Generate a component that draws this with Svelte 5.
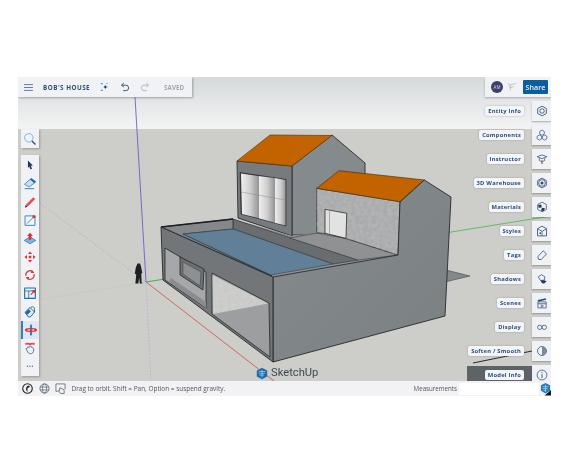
<script>
  const N = '#2d4f73';
  const R = '#ea2a2a';
  const B = '#2f7fc1';
  const tools = [
    { name: 'select', parts: [{ d: 'M6 3 L12 9 L9.5 9.4 L11 13 L9 13.6 L7.6 10.2 L6 12 Z', f: '#1f3a5a' }] },
    { name: 'eraser', parts: [{ d: 'M1.8 10 L10 3 L15.6 7 L7.5 13.4 Z', f: '#c9e0f2', s: B }, { d: 'M8.6 4.2 L10 3 L15.6 7 L13.6 8.6 Z', f: '#1f5f9c' }, { d: 'M2 15.4 H13.6', s: B, w: 1.2 }] },
    { name: 'pencil', parts: [{ d: 'M3.2 12.2 L12.5 2.8 L14.8 5 L5.4 14.4 Z', f: '#ee4a4a' }, { d: 'M3.2 12.2 L5.4 14.4 L2.2 15.4 Z', f: '#26384d' }] },
    { name: 'rectangle', parts: [{ d: 'M2.5 3.5 H14.5 V15 H2.5 Z', f: '#eef5fb', s: B, w: 1.1 }, { d: 'M4.5 13 L13 5', s: '#4a5a68', w: 0.9 }, { d: 'M11.6 3 H15 V6.2 H11.6 Z', f: R }] },
    { name: 'pushpull', parts: [{ d: 'M1.5 11.5 L8.5 7 L15.5 11.5 L8.5 15.5 Z', f: '#7fb6e0', s: B }, { d: 'M8.5 2 L12 6 H10 V10.5 H7 V6 H5 Z', f: R }] },
    { name: 'move', parts: [{ d: 'M8.5 1.8 L11 4.8 H6 Z M8.5 15.2 L11 12.2 H6 Z M1.8 8.5 L4.8 6 V11 Z M15.2 8.5 L12.2 6 V11 Z', f: R }, { d: 'M7 7 H10 V10 H7 Z', f: R }] },
    { name: 'rotate', parts: [{ d: 'M3.6 9.5 A5 5 0 0 1 12 4.8 M13.4 7.5 A5 5 0 0 1 5 12.2', s: R, w: 1.4 }, { d: 'M10.8 2.4 L13.8 6 L9.6 6 Z M6.2 14.6 L3.2 11 L7.4 11 Z', f: R }] },
    { name: 'scale', parts: [{ d: 'M2 2.5 H15 V15 H2 Z', f: '#e6f0f8', s: '#1f6ca8', w: 1.3 }, { d: 'M2 6 H15 M7 6 V15', s: '#1f6ca8', w: 1 }, { d: 'M9 10 L12 7 L10.4 5.6 L15 4.5 L14.2 9 L12.9 7.8 L10 10.8 Z', f: R }] },
    { name: 'paint', parts: [{ d: 'M2.5 9 L8.5 3 L14 8.5 L9 14.5 H6.5 Z', f: '#dcebf6', s: '#1f6ca8', w: 1.2 }, { d: 'M2.5 9 L7 5 L9.5 8 L5 12 Z', f: '#1f6ca8' }, { d: 'M9 3.5 C11 1 14 2 14 5 V9', s: N, w: 1 }] },
    { name: 'orbit', active: true, parts: [{ d: 'M8.5 2 V15', s: '#3d7fb8', w: 2.6 }, { d: 'M2 8.5 C2 6.4 15 6.4 15 8.5 C15 10.6 2 10.6 2 8.5 Z', s: R, w: 1.5 }, { d: 'M1 8.5 L4 6 V11 Z M16 8.5 L13 6 V11 Z', f: R }] },
    { name: 'hand', parts: [{ d: 'M2.5 3.5 H14.5', s: R, w: 1.6 }, { d: 'M5.5 2 L8.5 5 L11.5 2', s: R, w: 1 }, { d: 'M5 9 C5 7 7 7 7.5 8 L8 6.5 C9 5.5 10 6.5 10 7.5 C12 7.5 13 9 13 11 C13 14 11 15.5 9 15.5 C7 15.5 6 14 5 12 L3.6 9.6 C4 9 4.5 9 5 9 Z', f: '#eef2f7', s: N, w: 0.9 }] }
  ];
  const panels = [
    { label: 'Entity Info', parts: [{ d: 'M8 1.5 L13.8 4.8 V11.2 L8 14.5 L2.2 11.2 V4.8 Z', s: N, w: 1.1 }, { d: 'M8 5 A3 3 0 1 0 8 11 A3 3 0 1 0 8 5 Z', s: N, w: 1.1 }] },
    { label: 'Components', parts: [{ d: 'M8 1.5 L11 3.2 V6.8 L8 8.5 L5 6.8 V3.2 Z M4.5 8 L7.5 9.7 V13 L4.5 14.7 L1.5 13 V9.7 Z M11.5 8 L14.5 9.7 V13 L11.5 14.7 L8.5 13 V9.7 Z', s: N, w: 0.95 }] },
    { label: 'Instructor', parts: [{ d: 'M1.5 5 L8 2.5 L14.5 5 L8 7.5 Z', s: N, w: 1 }, { d: 'M4.5 7 V10 C6 11.5 10 11.5 11.5 10 V7', s: N, w: 1 }, { d: 'M8 9.5 V14', s: N, w: 0.8 }, { d: 'M7.2 12.5 H9 V14.3 H7.2 Z', f: R }] },
    { label: '3D Warehouse', parts: [{ d: 'M8 1.5 L13.8 4.8 V11.2 L8 14.5 L2.2 11.2 V4.8 Z', s: N, w: 1.1 }, { d: 'M8 3.6 A4.4 4.4 0 1 0 8 12.4 A4.4 4.4 0 1 0 8 3.6 Z', s: N, w: 1 }, { d: 'M8 6 A2 2 0 1 0 8 10 A2 2 0 1 0 8 6 Z', f: N }] },
    { label: 'Materials', parts: [{ d: 'M8 1.5 L13.8 4.8 V11.2 L8 14.5 L2.2 11.2 V4.8 Z', s: N, w: 1 }, { d: 'M3 5.2 L7 4.8 L7.5 8.5 L3.5 9 Z M8 9 L12 9.5 L10 13.5 L6.6 12.6 Z', f: '#1e3a5a' }] },
    { label: 'Styles', parts: [{ d: 'M8 1.5 L14 5 V14.5 H2 V5 Z', s: N, w: 1.1 }, { d: 'M2 5 L8 8.5 L14 5 M8 8.5 V14.5', s: N, w: 1 }, { d: 'M4 11 C5 9 7 9 6.8 12.5 Z', f: N }] },
    { label: 'Tags', parts: [{ d: 'M2.5 10 L9.5 2.5 L14 6.5 L7 14 H3.5 Z', s: N, w: 1.05 }] },
    { label: 'Shadows', parts: [{ d: 'M3 5 L7.5 2.2 L12 5.2 L11 9.5 L6 10 Z', s: N, w: 1 }, { d: 'M6 10 L11 9.5 L14 11 L11 14 L8 13.5 Z', f: '#1e3a5a' }] },
    { label: 'Scenes', parts: [{ d: 'M2.5 6.5 H13.5 V14.5 H2.5 Z M2.5 9 H13.5', s: N, w: 1 }, { d: 'M2.2 4 L13 1.6 L13.6 3.8 L2.8 6.2 Z', f: N }, { d: 'M7 10.4 L10 12 L7 13.6 Z', s: N, w: 0.8 }] },
    { label: 'Display', parts: [{ d: 'M5 5.5 A2.9 2.9 0 1 0 5 11.3 A2.9 2.9 0 1 0 5 5.5 Z M11 5.5 A2.9 2.9 0 1 0 11 11.3 A2.9 2.9 0 1 0 11 5.5 Z', s: N, w: 1 }] },
    { label: 'Soften / Smooth', parts: [{ d: 'M8 2 A6 6 0 1 0 8 14 A6 6 0 1 0 8 2 Z', s: N, w: 1 }, { d: 'M8 2 A6 6 0 0 1 8 14 Z', f: '#7d8c9a' }] },
    { label: 'Model Info', parts: [{ d: 'M8 1.5 A6.5 6.5 0 1 0 8 14.5 A6.5 6.5 0 1 0 8 1.5 Z', s: N, w: 1 }, { d: 'M8 7 V12 M8 4.2 V5.6', s: N, w: 1.2 }] }
  ];
</script>

{#snippet glyph(parts, box)}
  <svg class="glyph" viewBox={box} aria-hidden="true">
    {#each parts as p}
      <path d={p.d} fill={p.f ?? 'none'} stroke={p.s ?? 'none'} stroke-width={p.w ?? 1} stroke-linejoin="round" />
    {/each}
  </svg>
{/snippet}

<div class="viewport">
  <div class="stage">
    <svg class="scene" viewBox="18 77 533 304" aria-hidden="true">
      <defs>
        <linearGradient id="sky" x1="0" y1="0" x2="0" y2="1">
          <stop offset="0" stop-color="#d6dadb" />
          <stop offset="1" stop-color="#f3f4f4" />
        </linearGradient>
        <linearGradient id="pane" x1="0" y1="0" x2="1" y2="0">
          <stop offset="0" stop-color="#f0f0f0" />
          <stop offset="0.55" stop-color="#cfcfcf" />
          <stop offset="1" stop-color="#9a9a9a" />
        </linearGradient>
        <linearGradient id="wallR" x1="0" y1="0" x2="1" y2="1">
          <stop offset="0" stop-color="#858a8d" />
          <stop offset="1" stop-color="#7b8083" />
        </linearGradient>
        <filter id="mottle" x="0" y="0" width="100%" height="100%">
          <feTurbulence type="fractalNoise" baseFrequency="0.25" numOctaves="2" seed="4" result="n" />
          <feColorMatrix in="n" type="matrix" values="0 0 0 0 1  0 0 0 0 1  0 0 0 0 1  0.22 0 0 0 -0.07" result="w" />
          <feComposite in="w" in2="SourceGraphic" operator="in" result="t" />
          <feMerge><feMergeNode in="SourceGraphic" /><feMergeNode in="t" /></feMerge>
        </filter>
      </defs>

      <rect x="18" y="77" width="533" height="52" fill="url(#sky)" />
      <rect x="18" y="129" width="533" height="252" fill="#cdcec9" />

      <!-- axes -->
      <path d="M18 187 L146 282" stroke="#c9a8a8" stroke-width="0.7" stroke-dasharray="2 1.4" fill="none" />
      <path d="M18 303 L146 282" stroke="#b0cba9" stroke-width="0.7" stroke-dasharray="2 1.4" fill="none" />
      <path d="M146 282 L151 381" stroke="#acacd2" stroke-width="0.7" stroke-dasharray="2 1.4" fill="none" />
      <path d="M135 97 L146 282" stroke="#6663c8" stroke-width="0.9" fill="none" />
      <path d="M146 282 L274 381" stroke="#d25a58" stroke-width="0.9" fill="none" />
      <path d="M146 282 L165 279" stroke="#43b04a" stroke-width="1" fill="none" />
      <path d="M445 233 L551 216" stroke="#5fbf63" stroke-width="1" fill="none" />

      <!-- ground fragments -->
      <path d="M446 270 L470 276 L445 282 Z" fill="#85888a" stroke="#333" stroke-width="0.5" />
      <rect x="467" y="366" width="65" height="15" fill="#5e6366" />
      <path d="M473 363 L532 351" stroke="#26292b" stroke-width="1" fill="none" />

      <!-- upper house -->
      <path d="M292 166 L332 135 L365 163 L365 190 L320 235 L292 235 Z" fill="#858a8d" stroke="#2b2d2f" stroke-width="0.9" stroke-linejoin="round" />
      <path d="M237 161 L292 166 L292 236 L238 218 Z" fill="#777b7e" stroke="#2b2d2f" stroke-width="0.9" stroke-linejoin="round" />
      <path d="M237 161 L270 135 L332 135.5 L292 166 Z" fill="#c26300" stroke="#5a3a10" stroke-width="0.7" stroke-linejoin="round" />
      <path d="M240 172.5 L286 179.5 L286 226 L241 214 Z" fill="#3a3c3e" stroke="#26292b" stroke-width="0.6" />
      <path d="M241 173.5 L258 176 L258 218 L242 214 Z" fill="url(#pane)" />
      <path d="M258.5 176 L274 178 L274 222.6 L258.5 218.3 Z" fill="url(#pane)" />
      <path d="M274.5 178 L285.5 180 L285.5 225.5 L274.5 222.7 Z" fill="url(#pane)" />
      <path d="M241 192 L285.5 200" stroke="#8c8c8c" stroke-width="0.5" fill="none" />

      <!-- terrace floor -->
      <path d="M233 219 L292 236 L316 233 L398 255 L273 277 L161 227 Z" fill="#8e9092" />
      <path d="M233 219 L233 229 L333 264 L358 260 Z" fill="#6a6d6f" stroke="#2f3133" stroke-width="0.6" />
      <path d="M290 238 L317 233 L346 238.5 L398 255 L358 260 Z" fill="#8f9193" stroke="#3b3d3f" stroke-width="0.6" />

      <!-- second house front -->
      <path d="M316.7 188.3 L400 201.7 L398 255 L346 238.5 L325 233.5 L316.7 232.7 Z" fill="#a9aaab" stroke="#2b2d2f" stroke-width="0.8" filter="url(#mottle)" />
      <path d="M325 209.3 L346.7 213.3 L346 238.3 L325 233.3 Z" fill="#e2e2e0" stroke="#2b2d2f" stroke-width="0.8" />
      <path d="M329.5 210.4 V234.4" stroke="#9c9c9c" stroke-width="0.8" fill="none" />
      <path d="M316.7 188.3 L339 170.7 L424.3 180 L400 201.7 Z" fill="#c26300" stroke="#4a3210" stroke-width="0.7" stroke-linejoin="round" />

      <!-- pool and parapet -->
      <path d="M161 227 L233 219 L233 229 L183 234 L272 276 Z" fill="#85888a" stroke="#26292b" stroke-width="0.7" stroke-linejoin="round" />
      <path d="M161 227 L233 219" stroke="#1c1e20" stroke-width="1.3" fill="none" />
      <path d="M183 234 L233 229 L333 264 L271 275 Z" fill="#617f96" stroke="#33414d" stroke-width="0.6" />

      <!-- big wall -->
      <path d="M273 277 L398 255 L400 202 L424.3 180 L451 197 L445 316 L273 362 Z" fill="url(#wallR)" stroke="#26292b" stroke-width="0.9" stroke-linejoin="round" />

      <!-- front face -->
      <path d="M161 227 L273 277 L273 362 L163 280 Z" fill="#737678" stroke="#26292b" stroke-width="0.9" stroke-linejoin="round" />
      <path d="M165 248 L206 272 L206 308 L165 280 Z" fill="#a5a7a8" stroke="#26292b" stroke-width="0.8" />
      <path d="M169 282 L171 278 L206 302 L206 308 Z" fill="#8a8c8e" />
      <path d="M180 257 L204 269 L203 290 L180 275 Z" fill="#6d7072" stroke="#26292b" stroke-width="0.8" />
      <path d="M183 262 L201 272 L200 286 L183 274 Z" fill="#8d9092" stroke="#3d3f41" stroke-width="0.5" />
      <path d="M212 273 L269 303 L270 357 L212 314 Z" fill="#9c9ea0" stroke="#26292b" stroke-width="0.8" />
      <path d="M212.5 275 L268 303.5 L213 314 Z" fill="#c9c9c8" filter="url(#mottle)" />

      <!-- scale figure -->
      <path d="M137.5 263.5 h2.6 l1 3.5 l1.2 6 l-1 0.6 l0.3 9 l1.2 0.8 h-3 l-0.7 -6 l-0.7 6 h-3 l0.8 -9 l-1.4 -0.8 l1 -6 Z" fill="#1c2024" />
    </svg>

    <div class="brand">
      <svg class="brand-mark" viewBox="0 0 12 12" aria-hidden="true">
        <path d="M6 0.3 L11.2 3 V9 L6 11.7 L0.8 9 V3 Z" fill="#1a6fb3" />
        <path d="M2.6 4 H9.4 M2.6 5.8 H9 M3.4 7.6 H8 M6 2.2 V9.8" stroke="#cfe4f2" stroke-width="0.55" />
      </svg>
      <span>SketchUp</span>
    </div>

    <header class="file-bar">
      <svg class="menu" viewBox="0 0 9 7" aria-hidden="true"><path d="M0 .6 H9 M0 3.5 H9 M0 6.4 H9" stroke="#6a7f93" stroke-width="1" /></svg>
      <span class="file-name">BOB'S HOUSE</span>
      <svg class="bar-icon spark" viewBox="0 0 11 11" aria-hidden="true">
        <path d="M5.8 3.2 L6.8 4.9 L9 5.5 L6.8 6.1 L5.8 7.8 L4.8 6.1 L3.6 5.5 L4.8 4.9 Z" fill="#12406e" />
        <path d="M1 1 H3 V2.6 H1 Z M1 8.4 H3 V10 H1 Z M7 1 H8.3 V2.2 H7 Z" fill="#23a3dc" />
      </svg>
      <svg class="bar-icon undo" viewBox="0 0 11 11" aria-hidden="true"><path d="M2 3.5 H6.5 A3 3 0 0 1 6.5 9.5 H3.5 M4.2 1.2 L1.6 3.5 L4.2 5.6" fill="none" stroke="#2d4f73" stroke-width="1" /></svg>
      <svg class="bar-icon redo" viewBox="0 0 11 11" aria-hidden="true"><path d="M9 3.5 H4.5 A3 3 0 0 0 4.5 9.5 H7.5 M6.8 1.2 L9.4 3.5 L6.8 5.6" fill="none" stroke="#b3b6ba" stroke-width="1" /></svg>
      <span class="saved">SAVED</span>
    </header>

    <div class="account">
      <span class="avatar">AM</span>
      <svg class="cart" viewBox="0 0 12 12" aria-hidden="true"><path d="M1 2 L4 3.5 V10 M4 3.5 L11 1.5 M4 7 L8 5.5 M2.5 5 L4 7" fill="none" stroke="#a9adb1" stroke-width="0.8" /></svg>
      <span class="share">Share</span>
    </div>

    <aside class="left-rail">
      <div class="tool-card search">
        <svg viewBox="0 0 18 18" aria-hidden="true">
          <circle cx="7.5" cy="7.5" r="5.4" fill="#eef6fb" stroke="#6ba9d4" stroke-width="1.1" />
          <path d="M11.5 11.5 L16 16" stroke="#33475c" stroke-width="1.6" />
        </svg>
      </div>
      <div class="tool-card tools">
        {#each tools as t (t.name)}
          <div class="tool" class:active={t.active}>{@render glyph(t.parts, '0 0 17 17')}</div>
        {/each}
        <div class="tool more">...</div>
      </div>
    </aside>

    <aside class="right-rail">
      {#each panels as p (p.label)}
        <div class="panel-row">
          <span class="tip">{p.label}</span>
          <div class="panel-btn">{@render glyph(p.parts, '0 0 16 16')}</div>
        </div>
      {/each}
    </aside>
  </div>

  <footer class="status">
    <svg class="status-icon" viewBox="0 0 12 12" aria-hidden="true">
      <circle cx="6" cy="6" r="5.2" fill="none" stroke="#22262a" stroke-width="1.2" />
      <path d="M7.5 2.6 C4 3 3.4 7.6 6.4 9.6 C5.2 7 6 4.6 8.8 4.4 Z" fill="#22262a" />
    </svg>
    <svg class="status-icon" viewBox="0 0 12 12" aria-hidden="true">
      <circle cx="6" cy="6" r="5" fill="none" stroke="#4a5561" stroke-width="0.8" />
      <ellipse cx="6" cy="6" rx="2.2" ry="5" fill="none" stroke="#4a5561" stroke-width="0.7" />
      <path d="M1.2 4.4 H10.8 M1.2 7.6 H10.8" stroke="#4a5561" stroke-width="0.7" />
    </svg>
    <svg class="status-icon" viewBox="0 0 12 12" aria-hidden="true">
      <path d="M3 9 H1 V1 H11 V7" fill="none" stroke="#4a5561" stroke-width="0.8" />
      <path d="M5 6 C5 4.8 6.4 4.8 6.4 6 L8.6 6.6 C9.6 7 10 7.6 10 8.6 V11.4 H6 L3.6 8.4 C4 7.8 4.6 8 5 8.4 Z" fill="#f2f3f6" stroke="#4a5561" stroke-width="0.8" />
    </svg>
    <span class="hint">Drag to orbit. Shift = Pan, Option = suspend gravity.</span>
    <span class="measure-label">Measurements</span>
    <span class="measure-input"></span>
    <svg class="status-logo" viewBox="0 0 12 14" aria-hidden="true">
      <path d="M12 8 L12 14 L5 14 Z" fill="#15181b" />
      <path d="M6 0.5 L11 3 V9 L6 12 L1 9 V3 Z" fill="#2a7db8" />
      <path d="M3 4.5 H9 M3 6.5 H8 M4 8.5 H7 M6 2.5 V10" stroke="#d9e9f4" stroke-width="0.6" />
    </svg>
  </footer>
</div>

<style>
  :global(body) {
    margin: 0;
    background: #fff;
  }

  .viewport {
    box-sizing: border-box;
    width: 533px;
    margin: 77px 0 0 18px;
    display: flex;
    flex-direction: column;
    font-family: "Open Sans", "Noto Sans", sans-serif;
    filter: blur(0.35px);
  }

  .stage {
    position: relative;
    height: 304px;
    overflow: hidden;
  }

  .scene {
    display: block;
    width: 533px;
    height: 304px;
  }

  .brand {
    position: absolute;
    left: 238px;
    top: 289px;
    display: flex;
    align-items: center;
    gap: 3px;
    color: #3e4a53;
    font-family: Roboto, "Open Sans", sans-serif;
    font-size: 11.2px;
    line-height: 14px;
  }

  .brand-mark {
    width: 12px;
    height: 13px;
  }

  .file-bar {
    position: absolute;
    left: 0;
    top: 0;
    box-sizing: border-box;
    width: 174px;
    height: 20px;
    display: flex;
    align-items: center;
    padding-left: 6px;
    background: #f1f2f6;
    box-shadow: 1px 1px 2px rgba(60, 60, 60, 0.4);
  }

  .menu {
    width: 9px;
    height: 7px;
    flex: none;
  }

  .file-name {
    margin-left: 10px;
    width: 49px;
    flex: none;
    color: #2a4f78;
    font-size: 6.3px;
    font-weight: 700;
    letter-spacing: 0.48px;
    white-space: nowrap;
  }

  .bar-icon {
    width: 10px;
    height: 10px;
    flex: none;
  }

  .spark { margin-left: 8px; }
  .undo { margin-left: 10px; }
  .redo { margin-left: 10px; }

  .saved {
    margin-left: 14px;
    color: #a3a6ab;
    font-size: 6.2px;
    font-weight: 700;
    letter-spacing: 0.1px;
  }

  .account {
    position: absolute;
    right: 0;
    top: 0;
    box-sizing: border-box;
    width: 66px;
    height: 20px;
    display: flex;
    align-items: center;
    padding-left: 6px;
    background: #f1f2f6;
    box-shadow: 0 1px 2px rgba(60, 60, 60, 0.35);
  }

  .avatar {
    width: 12px;
    height: 12px;
    border-radius: 50%;
    background: #3f3f6e;
    color: #d8d8e8;
    font-size: 4.5px;
    line-height: 12px;
    text-align: center;
  }

  .cart {
    width: 10px;
    height: 10px;
    margin-left: 4px;
  }

  .share {
    width: 25px;
    height: 14px;
    margin-left: 6px;
    border-radius: 1px;
    background: #0a5d9f;
    color: #e8f2fa;
    font-size: 7.2px;
    font-weight: 600;
    line-height: 14px;
    text-align: center;
  }

  .left-rail {
    position: absolute;
    left: 3px;
    top: 52px;
    width: 18px;
    display: flex;
    flex-direction: column;
    gap: 7px;
  }

  .tool-card {
    background: #f1f2f6;
    box-shadow: 1px 1px 2px rgba(70, 70, 70, 0.4);
  }

  .search {
    height: 19px;
    display: flex;
    align-items: center;
    justify-content: center;
  }

  .search svg {
    width: 14px;
    height: 14px;
  }

  .tools {
    height: 221px;
    display: flex;
    flex-direction: column;
    padding-top: 1px;
    box-sizing: border-box;
  }

  .tool {
    box-sizing: border-box;
    height: 18.3px;
    flex: none;
    display: flex;
    align-items: center;
    justify-content: center;
  }

  .tool .glyph {
    width: 14px;
    height: 14px;
  }

  .tool.active {
    background: #dfe8f2;
    border-left: 2px solid #2f7fc1;
  }

  .more {
    color: #5a7a98;
    font-size: 8px;
    font-weight: 700;
    line-height: 12px;
    letter-spacing: 0.3px;
    padding-bottom: 4px;
  }

  .right-rail {
    position: absolute;
    right: 0;
    top: 24px;
    display: flex;
    flex-direction: column;
    align-items: flex-end;
    gap: 4px;
  }

  .panel-row {
    height: 20px;
    flex: none;
    display: flex;
    align-items: center;
    gap: 8px;
  }

  .tip {
    height: 10px;
    padding: 0 3px;
    border-radius: 2px;
    background: #f4f5f8;
    box-shadow: 0 0 2px rgba(90, 90, 90, 0.45);
    color: #2a4f78;
    font-size: 5.8px;
    font-weight: 700;
    letter-spacing: 0.22px;
    line-height: 10px;
    white-space: nowrap;
  }

  .panel-btn {
    width: 19px;
    height: 20px;
    display: flex;
    align-items: center;
    justify-content: center;
    background: #f1f2f6;
    box-shadow: 0 1px 1.5px rgba(70, 70, 70, 0.4);
  }

  .panel-btn .glyph {
    width: 12px;
    height: 12px;
  }

  .status {
    height: 15px;
    display: flex;
    align-items: center;
    padding-left: 4px;
    background: #f2f2f5;
    box-sizing: border-box;
  }

  .status-icon {
    width: 11px;
    height: 11px;
    flex: none;
    margin-right: 5.5px;
  }

  .hint {
    color: #50565c;
    font-size: 6.45px;
    white-space: nowrap;
  }

  .measure-label {
    margin-left: auto;
    color: #50565c;
    font-size: 6.2px;
  }

  .measure-input {
    width: 80px;
    height: 12px;
    margin-left: 2px;
    border-radius: 1px;
    background: #fff;
  }

  .status-logo {
    width: 11px;
    height: 14px;
    margin-left: 1px;
    flex: none;
    align-self: flex-end;
  }
</style>
